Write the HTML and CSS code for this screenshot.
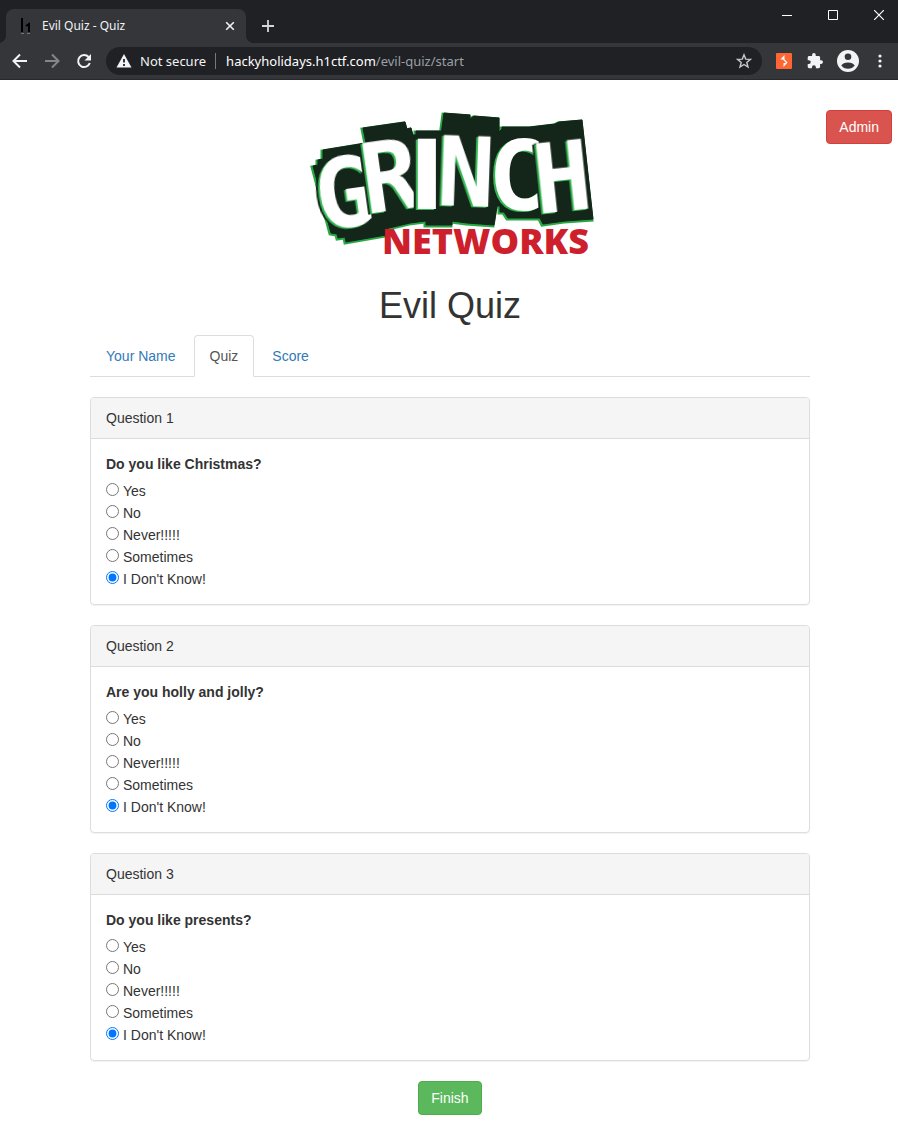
FILE: index.html
```html
<!DOCTYPE html>
<html lang="en">
<head>
<meta charset="utf-8">
<title>Evil Quiz - Quiz</title>
<link rel="stylesheet" href="styles.css">
</head>
<body>
<header class="browser">
  <div class="tab-strip">
    <div class="browser-tab">
      <svg class="favicon" width="12" height="18" viewBox="0 0 12 18" aria-hidden="true"><path d="M2 1v14M6 9l3-2v8" fill="none" stroke="#000" stroke-width="2"/><path d="M1 16.500h3M7 16.500h3" stroke="#77787a"/></svg>
      <span class="browser-tab-title">Evil Quiz - Quiz</span>
      <button class="icon-button tab-close" type="button" aria-label="Close tab"><svg width="10" height="10" viewBox="0 0 10 10"><path d="M1.200 1.200l7.600 7.600M8.800 1.200L1.200 8.800" stroke="#f1f3f4" stroke-width="1.600"/></svg></button>
    </div>
    <button class="icon-button new-tab" type="button" aria-label="New tab"><svg width="12" height="12" viewBox="0 0 12 12"><path d="M6 0v12M0 6h12" stroke="#d5d6d8" stroke-width="1.800"/></svg></button>
    <div class="window-controls">
      <button class="icon-button" type="button" aria-label="Minimize"><svg width="10" height="10" viewBox="0 0 10 10"><path d="M0 5.500h10" stroke="#fff"/></svg></button>
      <button class="icon-button" type="button" aria-label="Maximize"><svg width="10" height="10" viewBox="0 0 10 10"><path d="M.5.5h9v9h-9z" fill="none" stroke="#fff"/></svg></button>
      <button class="icon-button" type="button" aria-label="Close"><svg width="10" height="10" viewBox="0 0 10 10"><path d="M0 0l10 10M10 0L0 10" stroke="#fff" stroke-width="1.200"/></svg></button>
    </div>
  </div>
  <div class="toolbar">
    <div class="nav-buttons">
      <button class="icon-button" type="button" aria-label="Back"><svg width="16" height="16" viewBox="0 0 16 16"><path d="M15 8H2M8 1.500L1.500 8 8 14.500" fill="none" stroke="#f1f3f4" stroke-width="2"/></svg></button>
      <button class="icon-button" type="button" aria-label="Forward"><svg width="16" height="16" viewBox="0 0 16 16"><path d="M1 8h13M8 1.500L14.500 8 8 14.500" fill="none" stroke="#85868a" stroke-width="2"/></svg></button>
      <button class="icon-button" type="button" aria-label="Reload"><svg width="16" height="16" viewBox="0 0 16 16"><path d="M13.800 10A6 6 0 1 1 12.600 4" fill="none" stroke="#f1f3f4" stroke-width="2"/><path d="M15 1v6.500H8.500z" fill="#f1f3f4"/></svg></button>
    </div>
    <div class="address-bar">
      <svg width="16" height="14" viewBox="0 0 16 14" aria-hidden="true"><path d="M8 0l7.500 13.500H.5z" fill="#f1f3f4"/><path d="M8 5v3.500M8 10v2" stroke="#202124" stroke-width="1.800"/></svg>
      <span class="security">Not secure</span>
      <span class="url">hackyholidays.h1ctf.com<span class="url-path">/evil-quiz/start</span></span>
      <button class="icon-button bookmark" type="button" aria-label="Bookmark this tab"><svg width="16" height="16" viewBox="0 0 16 16"><path d="M8 1.800l1.700 4.300 4.700.3-3.600 3 1.200 4.600L8 11.500l-4 2.500 1.200-4.600-3.600-3 4.700-.3z" fill="none" stroke="#c8c9cb" stroke-width="1.400"/></svg></button>
    </div>
    <div class="extensions">
      <button class="icon-button" type="button" aria-label="Burp Suite"><svg width="16" height="16" viewBox="0 0 16 16"><rect width="16" height="16" rx="1" fill="#ff6633"/><path d="M8.500 2v4.500H4.500zM4.500 6.500L7 3.500l1.500-1v3.700l3 3.300-4 4.500V10h2.500L7 6.500z" fill="#fff"/></svg></button>
      <button class="icon-button" type="button" aria-label="Extensions"><svg width="16" height="16" viewBox="1 1 22 22"><path d="M20.500 11H19V7c0-1.100-.9-2-2-2h-4V3.500a2.500 2.500 0 0 0-5 0V5H4c-1.100 0-2 .9-2 2v3.800h1.500a2.700 2.700 0 0 1 0 5.400H2V20c0 1.100.9 2 2 2h3.800v-1.500a2.700 2.700 0 0 1 5.400 0V22H17c1.100 0 2-.9 2-2v-4h1.500a2.500 2.500 0 0 0 0-5z" fill="#f1f3f4"/></svg></button>
      <button class="icon-button" type="button" aria-label="Profile"><svg width="22" height="22" viewBox="0 0 22 22"><circle cx="11" cy="11" r="11" fill="#f1f3f4"/><circle cx="11" cy="6.700" r="3.300" fill="#35363a"/><path d="M4.300 15.500c1.200-1.900 3.600-3 6.700-3s5.500 1.100 6.700 3c-1.400 2-3.800 3.300-6.700 3.300s-5.300-1.300-6.700-3.300z" fill="#35363a"/></svg></button>
      <button class="icon-button" type="button" aria-label="Menu"><svg width="4" height="14" viewBox="0 0 4 14"><g fill="#f1f3f4"><circle cx="2" cy="2" r="1.600"/><circle cx="2" cy="7" r="1.600"/><circle cx="2" cy="12" r="1.600"/></g></svg></button>
    </div>
  </div>
</header>

<main class="page">
  <a class="btn btn-danger admin" href="#admin">Admin</a>
  <div class="container">
    <svg class="logo" width="295" height="155" viewBox="305 105 295 155" role="img" aria-label="Grinch Networks">
      <defs>
        <path id="plate" d="M315 166l5-1v-5l5-1v-9l43-7-3-15 42-6 2 7 4-1 2 7h3v-4h25v4l3-22 26 2v4l4-3 25 2v14l3-3v-2h28l25-3 4-2 23-2 11 99-28 2-22 3-3-6h-32l-4-6h-4v-6h-3l-3 19-27-2-15-2v4h-26v-4l-16 2-25 6 1 6-40 7-1-5-7 1-1-4-6-1z"/>
      </defs>
      <use href="#plate" class="plate-edge"/>
      <use href="#plate" class="plate"/>
      <g>
        <text class="glyph" transform="translate(322 231) rotate(-8)">G</text>
        <text class="glyph" transform="translate(368 214) rotate(-8)">R</text>
        <text class="glyph bar" transform="translate(411 209)">I</text>
        <text class="glyph" transform="translate(438 205) rotate(2)">N</text>
        <text class="glyph" transform="translate(490 210)">C</text>
        <text class="glyph" transform="translate(539 214) rotate(-6)">H</text>
      </g>
      <text class="networks" x="384" y="254">NETWORKS</text>
    </svg>
    <h1 class="title">Evil Quiz</h1>
    <nav class="tabs">
      <a class="tab" href="#name">Your Name</a>
      <a class="tab active" href="#quiz" aria-current="page">Quiz</a>
      <a class="tab" href="#score">Score</a>
    </nav>
    <form class="quiz">
      <section class="panel">
        <h2 class="panel-heading">Question 1</h2>
        <fieldset class="panel-body">
          <legend class="question">Do you like Christmas?</legend>
          <label class="option"><input type="radio" name="q1">Yes</label>
          <label class="option"><input type="radio" name="q1">No</label>
          <label class="option"><input type="radio" name="q1">Never!!!!!</label>
          <label class="option"><input type="radio" name="q1">Sometimes</label>
          <label class="option"><input type="radio" name="q1" checked>I Don't Know!</label>
        </fieldset>
      </section>
      <section class="panel">
        <h2 class="panel-heading">Question 2</h2>
        <fieldset class="panel-body">
          <legend class="question">Are you holly and jolly?</legend>
          <label class="option"><input type="radio" name="q2">Yes</label>
          <label class="option"><input type="radio" name="q2">No</label>
          <label class="option"><input type="radio" name="q2">Never!!!!!</label>
          <label class="option"><input type="radio" name="q2">Sometimes</label>
          <label class="option"><input type="radio" name="q2" checked>I Don't Know!</label>
        </fieldset>
      </section>
      <section class="panel">
        <h2 class="panel-heading">Question 3</h2>
        <fieldset class="panel-body">
          <legend class="question">Do you like presents?</legend>
          <label class="option"><input type="radio" name="q3">Yes</label>
          <label class="option"><input type="radio" name="q3">No</label>
          <label class="option"><input type="radio" name="q3">Never!!!!!</label>
          <label class="option"><input type="radio" name="q3">Sometimes</label>
          <label class="option"><input type="radio" name="q3" checked>I Don't Know!</label>
        </fieldset>
      </section>
      <button class="btn btn-success finish" type="submit">Finish</button>
    </form>
  </div>
</main>
</body>
</html>
```
FILE: styles.css
```css
* { box-sizing: border-box; }

body {
  margin: 0;
  background: #fff;
  color: #333;
  font: 14px/20px "Liberation Sans", Arial, sans-serif;
}

svg { display: block; }

/* Browser window */
.browser {
  background: #202124;
  color: #f1f3f4;
  font-family: "Noto Sans", "Open Sans", sans-serif;
  font-size: 13px;
}

.icon-button {
  display: flex;
  align-items: center;
  justify-content: center;
  padding: 0;
  border: 0;
  background: none;
}

.tab-strip {
  display: flex;
  height: 43px;
  padding-left: 6px;
}

.browser-tab {
  position: relative;
  display: flex;
  align-items: center;
  width: 240px;
  margin-top: 9px;
  padding: 0 11px 0 14px;
  border-radius: 8px 8px 0 0;
  background: #35363a;
}

.browser-tab::before,
.browser-tab::after {
  content: "";
  position: absolute;
  bottom: 0;
  width: 8px;
  height: 8px;
}

.browser-tab::before {
  right: 100%;
  background: radial-gradient(circle at 0 0, #202124 8px, #35363a 8px);
}

.browser-tab::after {
  left: 100%;
  background: radial-gradient(circle at 100% 0, #202124 8px, #35363a 8px);
}

.browser-tab-title {
  margin-left: 10px;
  font-size: 12px;
}

.tab-close { margin-left: auto; }

.new-tab {
  margin-top: 9px;
  padding: 0 16px;
}

.window-controls {
  display: flex;
  gap: 36px;
  margin-left: auto;
  padding: 10px 14px 0 0;
  align-items: flex-start;
}

.toolbar {
  display: flex;
  align-items: center;
  height: 37px;
  border-bottom: 1px solid #28292c;
  background: #35363a;
}

.nav-buttons {
  display: flex;
  gap: 16px;
  padding: 0 14px 0 12px;
}

.address-bar {
  display: flex;
  flex: 1;
  align-items: center;
  height: 28px;
  padding: 0 10px;
  border-radius: 14px;
  background: #202124;
}

.security {
  margin: 0 10px 0 8px;
  padding-right: 9px;
  border-right: 1px solid #77787b;
  line-height: 16px;
  white-space: nowrap;
}

.url {
  color: #fff;
  white-space: nowrap;
}

.url-path { color: #9aa0a6; }

.bookmark { margin-left: auto; }

.extensions {
  display: flex;
  align-items: center;
  gap: 15px;
  padding: 0 16px 0 14px;
}

.extensions .icon-button:nth-child(3) { margin-left: -1px; }

.extensions .icon-button:last-child { margin-left: 4px; }

/* Page */
.page {
  position: relative;
  padding: 25px 0 17px 2px;
}

.container {
  max-width: 720px;
  margin: 0 auto;
}

.btn {
  padding: 6px 12px;
  border: 1px solid;
  border-radius: 4px;
  color: #fff;
  font: inherit;
  text-decoration: none;
}

.btn-danger {
  border-color: #d43f3a;
  background: #d9534f;
}

.btn-success {
  border-color: #4cae4c;
  background: #5cb85c;
}

.admin {
  position: absolute;
  top: 30px;
  right: 6px;
}

.logo {
  margin: 0 auto;
  overflow: visible;
}

.plate-edge {
  fill: #27a844;
  stroke: #27a844;
  stroke-width: 3;
  transform: translate(-1px, 1px);
}

.plate {
  fill: #14251a;
  stroke: #14251a;
  stroke-width: 1;
}

.glyph {
  fill: #fff;
  font: bold 96px "DejaVu Sans Mono", monospace;
  filter: drop-shadow(-2px 1px 0 #32b750) drop-shadow(-2px 0 0 #14251a);
}

.bar { font-family: "DejaVu Sans", sans-serif; }

.networks {
  fill: #ce1f2c;
  font: 800 36px "Open Sans", "Noto Sans", sans-serif;
}

.title {
  margin: 26px 0 9px;
  font-size: 36px;
  font-weight: 500;
  line-height: 40px;
  text-align: center;
}

.tabs {
  display: flex;
  gap: 2px;
  border-bottom: 1px solid #ddd;
}

.tab {
  margin-bottom: -1px;
  padding: 10px 15px;
  border: 1px solid transparent;
  border-radius: 4px 4px 0 0;
  color: #337ab7;
  text-decoration: none;
}

.tab.active {
  border-color: #ddd #ddd #fff;
  background: #fff;
  color: #555;
}

.quiz {
  display: flex;
  flex-direction: column;
  gap: 20px;
  padding-top: 20px;
}

.panel {
  border: 1px solid #ddd;
  border-radius: 4px;
  box-shadow: 0 1px 1px rgba(0, 0, 0, 0.05);
}

.panel-heading {
  margin: 0;
  padding: 10px 15px;
  border-bottom: 1px solid #ddd;
  border-radius: 3px 3px 0 0;
  background: #f5f5f5;
  font-size: 14px;
  font-weight: normal;
}

.panel-body {
  margin: 0;
  padding: 15px;
  border: 0;
}

.question {
  float: left;
  width: 100%;
  margin-bottom: 5px;
  padding: 0;
  font-weight: bold;
}

.option {
  display: flex;
  clear: both;
  align-items: center;
  gap: 4px;
  padding-top: 2px;
}

.option input {
  width: 13px;
  height: 13px;
  margin: 0 0 3px;
}

.finish { align-self: center; }
```
